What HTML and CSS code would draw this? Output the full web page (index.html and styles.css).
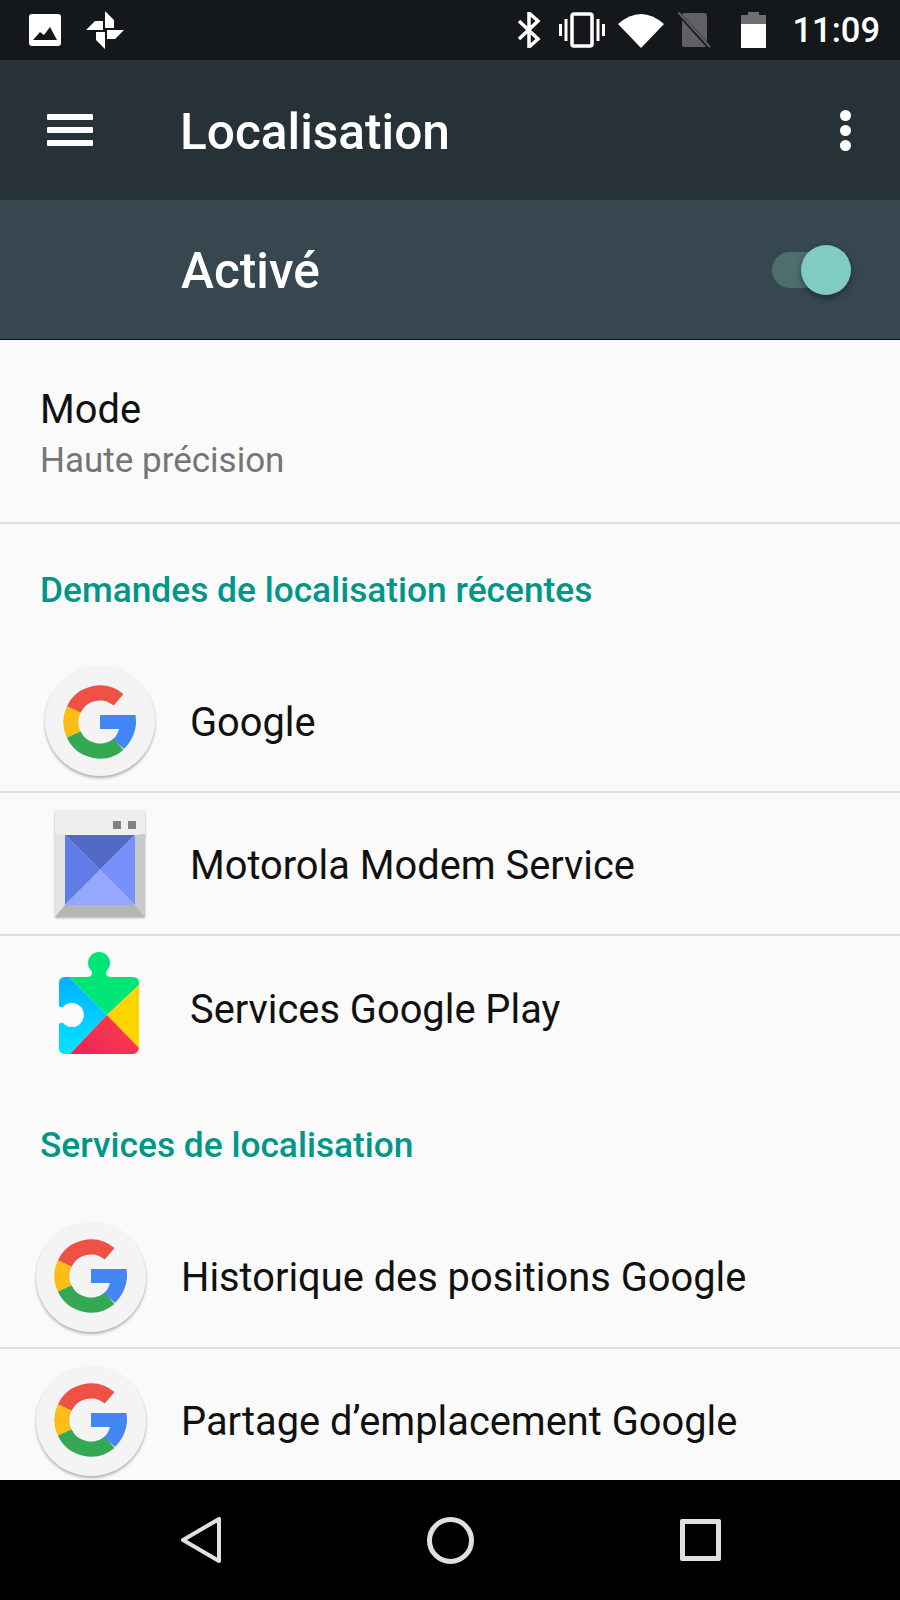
FILE: index.html
```html
<!DOCTYPE html>
<html lang="fr">
<head>
    <meta charset="UTF-8">
    <title>Localisation</title>
    <link rel="stylesheet" href="styles.css">
</head>
<body>
<svg class="defs" width="0" height="0">
    <symbol id="glogo" viewBox="0 0 110 112">
        <path d="M73.6 33.8A29 29 0 0 0 28.7 43.5" fill="none" stroke="#ef5145" stroke-width="15" />
        <path d="M28.7 43.5A29 29 0 0 0 28.7 68.5" fill="none" stroke="#fcbd14" stroke-width="15" />
        <path d="M28.7 68.5A29 29 0 0 0 73.6 78.2" fill="none" stroke="#34a853" stroke-width="15" />
        <path d="M55 49H90.5Q91 52 91 56C91 66 86 76 79 83L68 73C71 71 73 67 74 63H55Z" fill="#4285f4" />
    </symbol>
    <linearGradient id="playblue" x1="0" y1="0" x2="0" y2="1">
        <stop offset="0" stop-color="#00b2ff" />
        <stop offset="1" stop-color="#00e5ff" />
    </linearGradient>
    <linearGradient id="playred" x1="0" y1="1" x2="1" y2="0.3">
        <stop offset="0" stop-color="#e8245c" />
        <stop offset="1" stop-color="#ff3d47" />
    </linearGradient>
</svg>
<div class="phone">
    <div class="status">
        <svg class="ic-image" viewBox="0 0 32 32"><rect width="32" height="32" rx="3" fill="#fff" /><path d="M4 26L11 18L15 21L21 13L28 26Z" fill="#14181b" /></svg>
        <svg class="ic-wheel" viewBox="0 0 38 38"><path d="M19 0L28 9V17H19Z M38 19L29 28H21V19Z M19 38L10 29V21H19Z M0 19L9 10H17V19Z" fill="#fff" /></svg>
        <div class="spacer"></div>
        <svg class="ic-bt" viewBox="0 0 24 36"><path d="M2 9L21 27L12 35V1L21 9L2 27" fill="none" stroke="#fff" stroke-width="3.5" /></svg>
        <svg class="ic-vib" viewBox="0 0 46 36"><rect x="13" y="2" width="20" height="32" rx="2" fill="none" stroke="#fff" stroke-width="3.5" /><path d="M1.5 12V24M7 7V29M39 7V29M44.5 12V24" fill="none" stroke="#fff" stroke-width="3" /></svg>
        <svg class="ic-wifi" viewBox="0 0 46 36"><path d="M0 12Q23 -8 46 12L23 36Z" fill="#fff" /></svg>
        <svg class="ic-sim" viewBox="0 0 33 36"><path d="M4 3Q4 1 6 1H26Q29 1 29 4V33Q29 35 27 35H6Q4 35 4 33Z" fill="#5f6163" /><path d="M1 2L32 36" stroke="#14181b" stroke-width="4" /><path d="M0 0L32 35" stroke="#5f6163" stroke-width="2" /></svg>
        <svg class="ic-bat" viewBox="0 0 25 36"><path d="M7 0H18V3H25V13H0V3H7Z" fill="#6d6f71" /><rect y="12" width="25" height="24" fill="#fff" /></svg>
        <span class="clock">11:09</span>
    </div>
    <div class="toolbar">
        <div class="burger"><i></i><i></i><i></i></div>
        <div class="title">Localisation</div>
        <div class="dots"><i></i><i></i><i></i></div>
    </div>
    <div class="switchbar">
        <div class="title">Activé</div>
        <div class="toggle"><div class="track"></div><div class="thumb"></div></div>
    </div>
    <div class="content">
        <div class="mode">
            <div class="mode-name">Mode</div>
            <div class="mode-sub">Haute précision</div>
        </div>
        <div class="section first">Demandes de localisation récentes</div>
        <div class="row app">
            <div class="gcircle"><svg viewBox="0 0 110 112"><use href="#glogo" /></svg></div>
            <span>Google</span>
        </div>
        <div class="row app">
            <svg class="ic-moto" viewBox="0 0 90 108">
                <rect width="90" height="107" rx="2" fill="#eeeeee" />
                <path d="M0 24L10 25V95L0 107Z" fill="#e3e3e3" />
                <path d="M90 24L80 25V95L90 107Z" fill="#c9c9c9" />
                <path d="M0 107L10 95H80L90 107Z" fill="#b5b5b5" />
                <rect x="58" y="11" width="8" height="8" fill="#808080" />
                <rect x="73" y="11" width="8" height="8" fill="#808080" />
                <path d="M10 25H80L45 60Z" fill="#5369c6" />
                <path d="M10 25L45 60L10 95Z" fill="#5f7ce6" />
                <path d="M80 25V95L45 60Z" fill="#7890fc" />
                <path d="M10 95L45 60L80 95Z" fill="#96a8fd" />
            </svg>
            <span>Motorola Modem Service</span>
        </div>
        <div class="row app last">
            <svg class="ic-play" viewBox="0 0 80 102">
                <circle cx="40" cy="11" r="11" fill="#00e676" />
                <path d="M33 18H47V22Q48 25 52 25H74Q80 25 80 31V33L48 63L10 25H28Q32 25 33 22Z" fill="#00e676" />
                <path d="M10 25L48 63L11 102H6Q0 102 0 96V73Q0 70 4 71A12 12 0 1 0 4 55Q0 56 0 53V31Q0 25 6 25Z" fill="url(#playblue)" />
                <path d="M80 33V96L48 63Z" fill="#ffd500" />
                <path d="M11 102L48 63L80 96Q79 102 73 102Z" fill="url(#playred)" />
            </svg>
            <span>Services Google Play</span>
        </div>
        <div class="section">Services de localisation</div>
        <div class="row service">
            <div class="gcircle"><svg viewBox="0 0 110 112"><use href="#glogo" /></svg></div>
            <span>Historique des positions Google</span>
        </div>
        <div class="row service">
            <div class="gcircle"><svg viewBox="0 0 110 112"><use href="#glogo" /></svg></div>
            <span>Partage d’emplacement Google</span>
        </div>
    </div>
    <div class="navbar">
        <svg class="ic-back" viewBox="0 0 40 46"><path d="M38 2V44L2 23Z" fill="none" stroke="#e0e0e0" stroke-width="4" stroke-linejoin="round" /></svg>
        <div class="ic-home"></div>
        <div class="ic-recent"></div>
    </div>
</div>
</body>
</html>
```

FILE: styles.css
```css
* {
    padding: 0;
    margin: 0;
    box-sizing: border-box;
}

body {
    font-family: Roboto, "Noto Sans", sans-serif;
    background: #000;
}

.defs {
    position: absolute;
}

.phone {
    width: 900px;
    height: 1600px;
    display: flex;
    flex-direction: column;
    overflow: hidden;
    background: #fafafa;
}

/* status bar */
.status {
    height: 60px;
    background: #14181b;
    display: flex;
    align-items: center;
    padding: 0 20px 0 29px;
    flex: none;
}

.status svg {
    display: block;
    flex: none;
}

.ic-image {
    width: 32px;
    height: 32px;
}

.ic-wheel {
    width: 38px;
    height: 38px;
    margin-left: 25px;
}

.spacer {
    flex: 1;
}

.ic-bt {
    width: 24px;
    height: 36px;
}

.ic-vib {
    width: 46px;
    height: 36px;
    margin-left: 18px;
}

.ic-wifi {
    width: 46px;
    height: 36px;
    margin-left: 13px;
}

.ic-sim {
    width: 33px;
    height: 36px;
    margin-left: 14px;
}

.ic-bat {
    width: 25px;
    height: 36px;
    margin-left: 30px;
}

.clock {
    margin-left: 26px;
    color: #fff;
    font-size: 34.5px;
    font-weight: 500;
}

/* app bars */
.toolbar {
    height: 140px;
    background: #263238;
    display: flex;
    align-items: center;
    padding-left: 47px;
    flex: none;
}

.title {
    color: #fff;
    font-size: 49.6px;
    line-height: 60px;
    font-weight: 500;
    padding-top: 3px;
}

.toolbar .title {
    margin-left: 87px;
    flex: 1;
}

.burger {
    width: 46px;
    display: flex;
    flex-direction: column;
    gap: 7px;
}

.burger i {
    display: block;
    height: 6px;
    border-radius: 1px;
    background: #fff;
}

.dots {
    width: 11px;
    margin-right: 49px;
    display: flex;
    flex-direction: column;
    gap: 4px;
}

.dots i {
    display: block;
    width: 11px;
    height: 11px;
    border-radius: 50%;
    background: #fff;
}

.switchbar {
    height: 140px;
    background: #37474f;
    border-bottom: 1px solid #0c1014;
    display: flex;
    align-items: center;
    justify-content: space-between;
    padding-left: 181px;
    padding-right: 48px;
    flex: none;
}

.toggle {
    position: relative;
    width: 80px;
    height: 36px;
}

.track {
    width: 76px;
    height: 36px;
    border-radius: 18px;
    background: #4e6e6e;
}

.thumb {
    position: absolute;
    right: 1px;
    top: -7px;
    width: 50px;
    height: 50px;
    border-radius: 50%;
    background: #80cbc4;
    box-shadow: 0 3px 6px rgba(0, 0, 0, 0.4);
}

/* list */
.content {
    flex: 1;
    min-height: 0;
    overflow: hidden;
}

.mode {
    height: 184px;
    padding: 43px 0 0 40px;
    border-bottom: 2px solid #e0e0e0;
}

.mode-name {
    font-size: 39.8px;
    line-height: 54px;
    color: #111;
}

.mode-sub {
    font-size: 35px;
    line-height: 48px;
    color: #757575;
}

.section {
    height: 127px;
    padding: 44px 0 0 40px;
    font-size: 35.3px;
    line-height: 44px;
    font-weight: 500;
    color: #009688;
}

.section.first {
    height: 126px;
}

.row {
    height: 143px;
    display: flex;
    align-items: center;
    border-bottom: 2px solid #e0e0e0;
    font-size: 39.8px;
    color: #111;
}

.row.last {
    border-bottom: 0;
}

.row.app {
    padding-left: 45px;
}

.row.service {
    padding-left: 36px;
}

.row.service:last-child {
    border-bottom: 0;
}

.row span {
    flex: none;
    padding-top: 3px;
}

.row.service span {
    padding-top: 1px;
}

.gcircle {
    width: 110px;
    height: 110px;
    border-radius: 50%;
    background: #f4f4f4;
    box-shadow: 0 2px 3px rgba(0, 0, 0, 0.3);
    margin-right: 35px;
    flex: none;
}

.gcircle svg {
    display: block;
    width: 110px;
    height: 112px;
}

.row.service .gcircle svg {
    margin-top: -2px;
}

.ic-moto {
    width: 90px;
    height: 108px;
    margin-left: 10px;
    margin-right: 45px;
    flex: none;
    filter: drop-shadow(0 1px 1px rgba(0, 0, 0, 0.3));
}

.ic-play {
    width: 80px;
    height: 102px;
    margin-left: 14px;
    margin-right: 51px;
    margin-bottom: 9px;
    flex: none;
}

/* nav bar */
.navbar {
    height: 120px;
    background: #000;
    display: flex;
    align-items: center;
    justify-content: center;
    gap: 206px;
    padding-left: 2px;
    flex: none;
}

.ic-back {
    width: 40px;
    height: 46px;
}

.ic-home {
    width: 47px;
    height: 47px;
    border-radius: 50%;
    border: 5px solid #e0e0e0;
}

.ic-recent {
    width: 41px;
    height: 42px;
    border-radius: 2px;
    border: 5px solid #e0e0e0;
}
```
